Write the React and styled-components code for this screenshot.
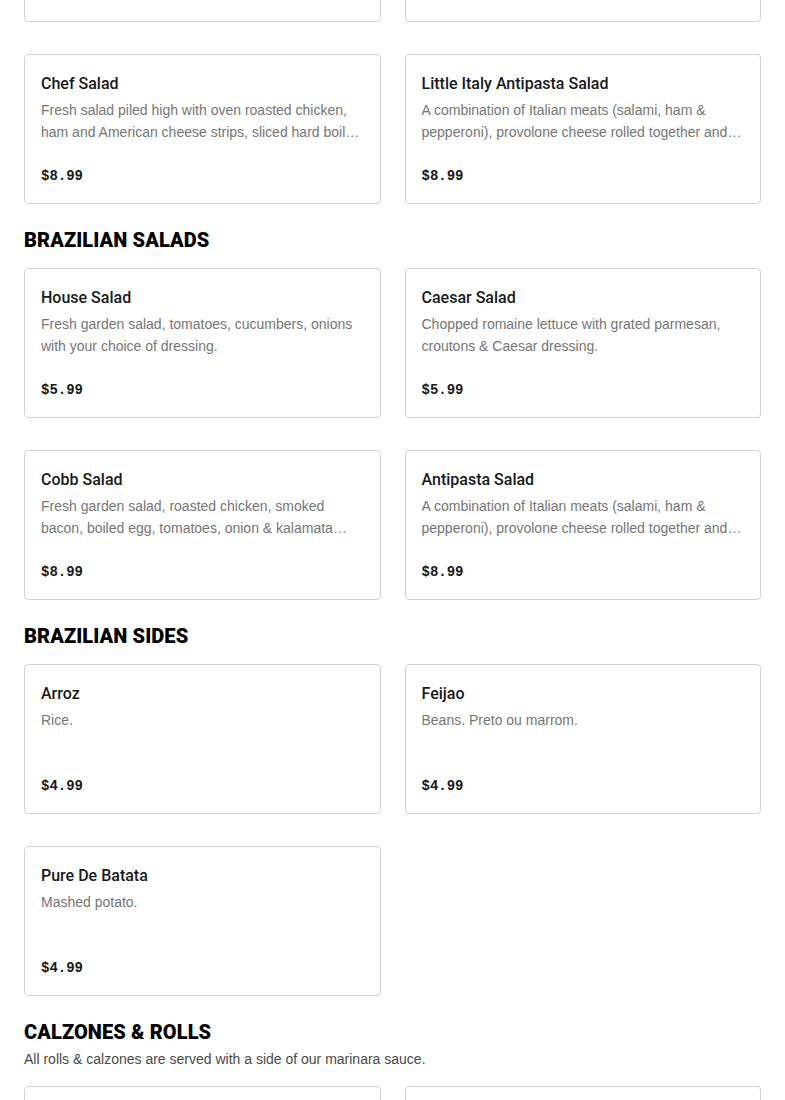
import styled, { createGlobalStyle } from "styled-components";

const GlobalStyle = createGlobalStyle`
  body {
    margin: 0;
    background: #ffffff;
    overflow: hidden;
    font-family: "Liberation Sans", Arial, sans-serif;
    color: #191919;
  }
`;

const menu = [
  {
    id: "salads",
    items: [
      { name: "Garden Salad", desc: "Fresh garden salad with tomatoes and cucumbers.", price: "$6.99" },
      { name: "Greek Salad", desc: "Romaine, feta, olives, onions and tomatoes.", price: "$7.99" },
      { name: "Caesar Salad", desc: "Romaine lettuce, parmesan, croutons & Caesar dressing.", price: "$6.99" },
      { name: "Chicken Caesar Salad", desc: "Romaine lettuce, grilled chicken, parmesan & croutons.", price: "$8.99" },
      {
        name: "Chef Salad",
        desc: "Fresh salad piled high with oven roasted chicken, ham and American cheese strips, sliced hard boiled egg, tomatoes and cucumbers.",
        price: "$8.99",
      },
      {
        name: "Little Italy Antipasta Salad",
        desc: "A combination of Italian meats (salami, ham & pepperoni), provolone cheese rolled together and served on a bed of lettuce.",
        price: "$8.99",
      },
    ],
  },
  {
    id: "brazilian-salads",
    title: "BRAZILIAN SALADS",
    items: [
      { name: "House Salad", desc: "Fresh garden salad, tomatoes, cucumbers, onions with your choice of dressing.", price: "$5.99" },
      { name: "Caesar Salad", desc: "Chopped romaine lettuce with grated parmesan, croutons & Caesar dressing.", price: "$5.99" },
      {
        name: "Cobb Salad",
        desc: "Fresh garden salad, roasted chicken, smoked bacon, boiled egg, tomatoes, onion & kalamata olives.",
        price: "$8.99",
      },
      {
        name: "Antipasta Salad",
        desc: "A combination of Italian meats (salami, ham & pepperoni), provolone cheese rolled together and served on a bed of lettuce.",
        price: "$8.99",
      },
    ],
  },
  {
    id: "brazilian-sides",
    title: "BRAZILIAN SIDES",
    items: [
      { name: "Arroz", desc: "Rice.", price: "$4.99" },
      { name: "Feijao", desc: "Beans. Preto ou marrom.", price: "$4.99" },
      { name: "Pure De Batata", desc: "Mashed potato.", price: "$4.99" },
    ],
  },
  {
    id: "calzones",
    title: "CALZONES & ROLLS",
    note: "All rolls & calzones are served with a side of our marinara sauce.",
    items: [
      { name: "Cheese Calzone", desc: "Ricotta and mozzarella cheese.", price: "$9.99" },
      { name: "Pepperoni Roll", desc: "Pepperoni and mozzarella cheese.", price: "$8.99" },
    ],
  },
];

function App() {
  return (
    <>
      <GlobalStyle />
      <Page>
        {menu.map((section) => (
          <Section key={section.id}>
            {section.title && (
              <SectionHeader>
                <SectionTitle>{section.title}</SectionTitle>
                {section.note && <SectionNote>{section.note}</SectionNote>}
              </SectionHeader>
            )}
            <ItemGrid>
              {section.items.map((item) => (
                <ItemCard key={item.name}>
                  <ItemName>{item.name}</ItemName>
                  <ItemDesc>{item.desc}</ItemDesc>
                  <ItemPrice>{item.price}</ItemPrice>
                </ItemCard>
              ))}
            </ItemGrid>
          </Section>
        ))}
      </Page>
    </>
  );
}

export default App;

// the page is scrolled: the first section starts above the window
const Page = styled.main`
  display: flex;
  flex-direction: column;
  gap: 24px;
  padding: 0 24px;
  margin-top: -310px;
`;

const Section = styled.section`
  display: flex;
  flex-direction: column;
  gap: 16px;
`;

const SectionHeader = styled.div`
  display: flex;
  flex-direction: column;
  gap: 4px;
`;

const SectionTitle = styled.h2`
  margin: 0;
  font-family: Roboto, "Liberation Sans", Arial, sans-serif;
  font-weight: 900;
  font-size: 20px;
  line-height: 24px;
  letter-spacing: 0.1px;
  color: #000000;
`;

const SectionNote = styled.p`
  margin: 0;
  font-size: 14px;
  line-height: 22px;
  color: #494949;
`;

const ItemGrid = styled.div`
  display: grid;
  grid-template-columns: 1fr 1fr;
  column-gap: 24px;
  row-gap: 32px;
`;

const ItemCard = styled.div`
  display: flex;
  flex-direction: column;
  box-sizing: border-box;
  height: 150px;
  padding: 16px;
  border: 1px solid #d3d3d3;
  border-radius: 4px;
  background: #ffffff;
`;

const ItemName = styled.h3`
  margin: 0;
  font-family: Roboto, "Liberation Sans", Arial, sans-serif;
  font-size: 16px;
  font-weight: 500;
  line-height: 26px;
  color: #191919;
`;

const ItemDesc = styled.p`
  margin: 2px 0 0;
  font-size: 14px;
  line-height: 22px;
  color: #767676;
  display: -webkit-box;
  -webkit-line-clamp: 2;
  -webkit-box-orient: vertical;
  overflow: hidden;
`;

const ItemPrice = styled.span`
  margin-top: auto;
  font-family: "Liberation Mono", "Courier New", monospace;
  font-size: 14px;
  font-weight: 700;
  line-height: 22px;
  color: #191919;
`;
